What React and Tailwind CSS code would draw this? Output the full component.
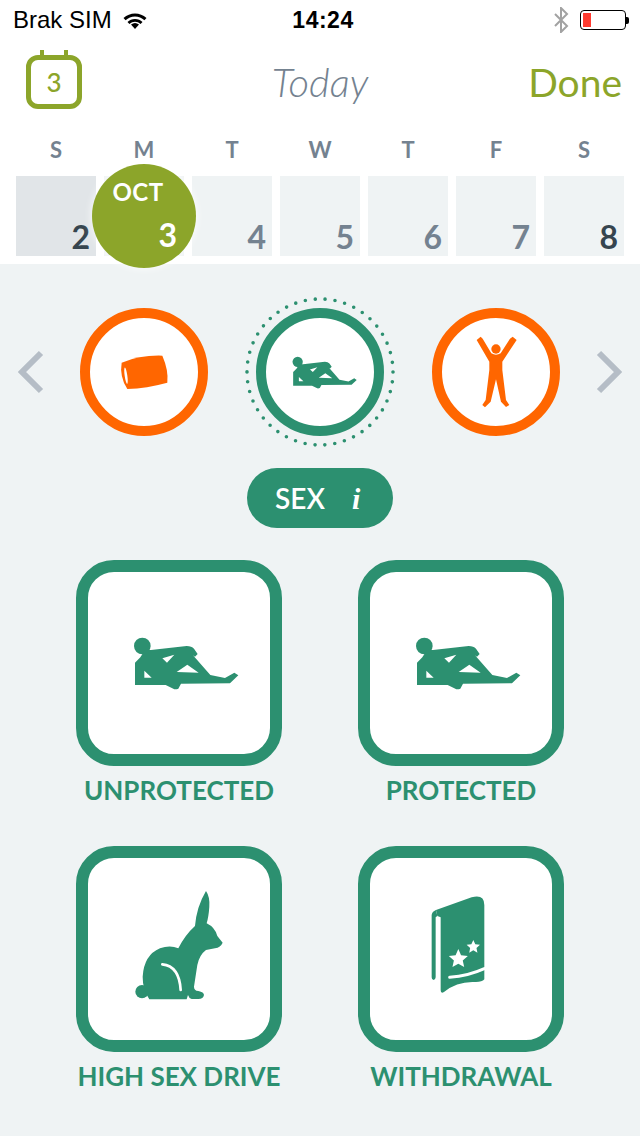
const LATO = "font-['Lato',sans-serif]";
const GREEN = '#2c9070';
const ORANGE = '#ff6600';

const days = [
  { letter: 'S', num: 2, cell: 'bg-[#e1e5e8]', text: 'text-[#36454f]' },
  { letter: 'M', num: 3, selected: true, cell: 'bg-[#eff3f4]', text: 'text-white' },
  { letter: 'T', num: 4, cell: 'bg-[#eff3f4]', text: 'text-[#748290]' },
  { letter: 'W', num: 5, cell: 'bg-[#eff3f4]', text: 'text-[#748290]' },
  { letter: 'T', num: 6, cell: 'bg-[#eff3f4]', text: 'text-[#748290]' },
  { letter: 'F', num: 7, cell: 'bg-[#eff3f4]', text: 'text-[#748290]' },
  { letter: 'S', num: 8, cell: 'bg-[#eff3f4]', text: 'text-[#36454f]' },
];

// five pointed star, returns svg points
const star = (cx, cy, R, r) => {
  const pts = [];
  for (let i = 0; i < 10; i++) {
    const a = -Math.PI / 2 + (i * Math.PI) / 5;
    const rad = i % 2 === 0 ? R : r;
    pts.push(`${(cx + rad * Math.cos(a)).toFixed(1)},${(cy + rad * Math.sin(a)).toFixed(1)}`);
  }
  return pts.join(' ');
};

// Reclining figure, drawn in 3x crop units
const Figure = ({ transform }) => (
  <g transform={transform} fill={GREEN}>
    <circle cx="52" cy="48" r="25" />
    <path
      fillRule="evenodd"
      d="M30 98 L46 82 L60 60 L78 60 L185 48 Q200 48 207 56 L218 72 L210 80 L204 76 L256 135 L300 144 L328 128 L340 136 L315 160 L168 161 L160 176 Q150 180 145 176 L122 165 L30 165 Z
         M112 85 L148 74 L126 98 Z
         M155 126 L187 104 L221 128 Z
         M58 122 L80 143 L58 143 Z"
    />
  </g>
);

const Barrel = () => (
  <g transform="translate(-90 -28) scale(0.3333)">
    <path
      fill={ORANGE}
      d="M365 218 Q420 195 487 197 Q506 240 502 278 Q440 295 382 297 Q358 260 365 218 Z"
    />
    <ellipse cx="378" cy="257" rx="4" ry="25" fill="#ffffff" transform="rotate(-8 378 257)" />
  </g>
);

const Person = () => (
  <g transform="translate(-22 -28) scale(0.3333)" fill={ORANGE}>
    <circle cx="228" cy="177" r="14" />
    <path d="M170 150 L182 140 L188 146 L214 190 Q228 198 242 190 L270 146 L278 140 L290 150 L247 215 L247 240 L258 330 L268 345 L258 351 L243 335 L228 268 L212 335 L195 352 L187 345 L197 330 L208 240 L208 215 Z" />
  </g>
);

const Bunny = () => (
  <g transform="translate(-18 -18) scale(0.3333)">
    <circle cx="216" cy="455" r="20" fill={GREEN} />
    <path
      fill={GREEN}
      d="M408 153 Q420 170 418 200 Q416 230 410 250 Q435 262 442 288 L458 308 Q452 322 435 325 L408 330 Q388 345 382 375 L372 440 Q372 452 385 453 Q402 456 402 465 Q400 477 385 477 L365 477 Q357 475 354 465 L350 478 L238 478 Q218 450 218 410 Q222 345 270 325 Q300 314 325 325 Q345 285 375 258 Q380 200 408 153 Z"
    />
    <path d="M277 373 Q328 378 332 450" fill="none" stroke="#ffffff" strokeWidth="8" strokeLinecap="round" />
  </g>
);

const Book = () => (
  <g transform="translate(-20 -18) scale(0.3333)" fill={GREEN}>
    <path d="M245 225 Q246 215 258 210 L262 228 L257 232 L257 412 Q256 420 251 420 Q245 420 245 412 Z" />
    <path d="M258 210 L365 172 Q403 162 403 195 L403 418 Q395 428 370 426 Q320 425 282 456 Q272 462 272 450 L272 232 L262 228 Z" />
    <path d="M299 412 Q355 408 403 386" fill="none" stroke="#ffffff" strokeWidth="9" strokeLinecap="round" />
    <polygon fill="#ffffff" points={star(325, 357, 30, 14)} />
    <polygon fill="#ffffff" points={star(370, 321, 21, 10)} />
  </g>
);

const Chevron = ({ flip }) => (
  <svg width="26" height="44" viewBox="0 0 26 44" fill="none">
    <path
      d={flip ? 'M3 3 L22 22 L3 41' : 'M23 3 L4 22 L23 41'}
      stroke="#b5bdc6"
      strokeWidth="6"
    />
  </svg>
);

const CircleItem = ({ color, children, selected }) => (
  <div className="relative w-32 h-32 shrink-0">
    {selected && (
      <svg className="absolute -left-3 -top-3" width="152" height="152" viewBox="0 0 152 152" fill="none">
        <circle cx="76" cy="76" r="73" stroke={GREEN} strokeWidth="3.6" strokeLinecap="round" strokeDasharray="0 9.96" />
      </svg>
    )}
    <div className={`w-32 h-32 rounded-full bg-white border-[10px] ${color}`}>
      <svg width="108" height="108" viewBox="0 0 108 108">{children}</svg>
    </div>
  </div>
);

const OptionCard = ({ label, children }) => (
  <div className="flex flex-col items-center">
    <div className="w-[206px] h-[206px] bg-white border-[12px] border-[#2c9070] rounded-[38px]">
      <svg width="182" height="182" viewBox="0 0 182 182">{children}</svg>
    </div>
    <div className={`h-12 flex items-center text-[26px] font-bold whitespace-nowrap text-[#2c9070] ${LATO}`}>{label}</div>
  </div>
);

export default function App() {
  return (
    <div className="w-[640px] h-[1136px] overflow-hidden bg-white flex flex-col">
      {/* status bar */}
      <div className="h-10 flex items-center pl-[13px] pr-[11px] font-['Liberation_Sans',sans-serif] text-black">
        <div className="flex-1 flex items-center gap-[11px] text-[24px]">
          <span>Brak SIM</span>
          <svg width="24" height="18" viewBox="0 0 24 18" fill="#000">
            <path d="M12 18 L8 13.5 Q12 10.5 16 13.5 Z" />
            <path d="M12 8 Q16.5 8 19.5 11 L17.6 13 Q15 10.8 12 10.8 Q9 10.8 6.4 13 L4.5 11 Q7.5 8 12 8 Z" />
            <path d="M12 2.5 Q18.5 2.5 23.5 7 L21.4 9.2 Q17.5 5.4 12 5.4 Q6.5 5.4 2.6 9.2 L0.5 7 Q5.5 2.5 12 2.5 Z" />
          </svg>
        </div>
        <div className="text-[23px] font-bold tracking-[0.5px] pl-1">14:24</div>
        <div className="flex-1 flex items-center justify-end gap-[11px]">
          <svg width="16" height="26" viewBox="0 0 16 26" fill="none">
            <path d="M2 7 L14 19 L8 25 L8 1 L14 7 L2 19" stroke="#a2a2a2" strokeWidth="2" />
          </svg>
          <div className="flex items-center">
            <div className="w-[46px] h-[20px] border border-black rounded-[4px] p-[2px]">
              <div className="w-2 h-full bg-[#ff3b30]" />
            </div>
            <div className="w-[3px] h-[7px] bg-black rounded-r-[2px]" />
          </div>
        </div>
      </div>

      {/* header */}
      <div className={`h-[88px] grid grid-cols-[1fr_auto_1fr] items-center pl-[26px] pr-[18px] ${LATO}`}>
        <div className="relative w-14 h-[54px] -mt-1 border-[5px] border-[#8ca52a] rounded-[12px] flex items-center justify-center text-[26px] font-medium text-[#8ca52a]">
          3
          <div className="absolute -top-[10px] left-[9px] w-[4px] h-[6px] bg-[#8ca52a]" />
          <div className="absolute -top-[10px] right-[9px] w-[4px] h-[6px] bg-[#8ca52a]" />
        </div>
        <div className="text-[40px] italic font-light text-[#748290] pr-2 -mt-1">Today</div>
        <div className="text-right text-[39px] text-[#8ca52a] -mt-1">Done</div>
      </div>

      {/* week */}
      <div className={`h-[136px] shrink-0 px-4 ${LATO}`}>
        <div className="flex gap-2 mb-[6px]">
          {days.map((d, i) => (
            <div key={i} className="w-20 h-[42px] flex items-center justify-center text-[22px] font-bold text-[#748290]">
              {d.letter}
            </div>
          ))}
        </div>
        <div className="flex gap-2">
          {days.map((d, i) => (
            <div key={i} className={`relative w-20 h-20 flex items-end justify-end pr-[6px] ${d.cell}`}>
              {d.selected ? (
                <div className="absolute -left-3 -top-3 z-10 w-[104px] h-[104px] rounded-full bg-[#8ca52a] shadow-[0_0_8px_rgba(255,255,255,0.9)] flex flex-col items-center text-white font-bold">
                  <div className="text-[24px] leading-none mt-[16px] pr-3 tracking-[0.5px]">OCT</div>
                  <div className="self-end pr-[19px] text-[32px] leading-none mt-[15px]">3</div>
                </div>
              ) : (
                <span className={`text-[32px] font-bold leading-none pb-[3px] ${d.text}`}>{d.num}</span>
              )}
            </div>
          ))}
        </div>
      </div>

      {/* body */}
      <div className="flex-1 bg-[#eff3f4] flex flex-col items-center pt-11">
        <div className="w-full flex items-center pl-[18px]">
          <Chevron />
          <div className="ml-9 flex gap-12">
            <CircleItem color="border-[#ff6600]"><Barrel /></CircleItem>
            <CircleItem color="border-[#2c9070]" selected>
              <Figure transform="translate(21 34) scale(0.205)" />
            </CircleItem>
            <CircleItem color="border-[#ff6600]"><Person /></CircleItem>
          </div>
          <div className="ml-9"><Chevron flip /></div>
        </div>

        <div className={`mt-8 w-[146px] h-[60px] rounded-full bg-[#2c9070] flex items-center pl-7 text-white ${LATO}`}>
          <span className="text-[28px] font-semibold">SEX</span>
          <span className="ml-[27px] text-[30px] font-bold italic font-['Liberation_Serif',serif]">i</span>
        </div>

        <div className="mt-8 grid grid-cols-[206px_206px] gap-x-[76px] gap-y-8">
          <OptionCard label="UNPROTECTED"><Figure transform="translate(37 58) scale(0.3333)" /></OptionCard>
          <OptionCard label="PROTECTED"><Figure transform="translate(37 58) scale(0.3333)" /></OptionCard>
          <OptionCard label="HIGH SEX DRIVE"><Bunny /></OptionCard>
          <OptionCard label="WITHDRAWAL"><Book /></OptionCard>
        </div>
      </div>
    </div>
  );
}
